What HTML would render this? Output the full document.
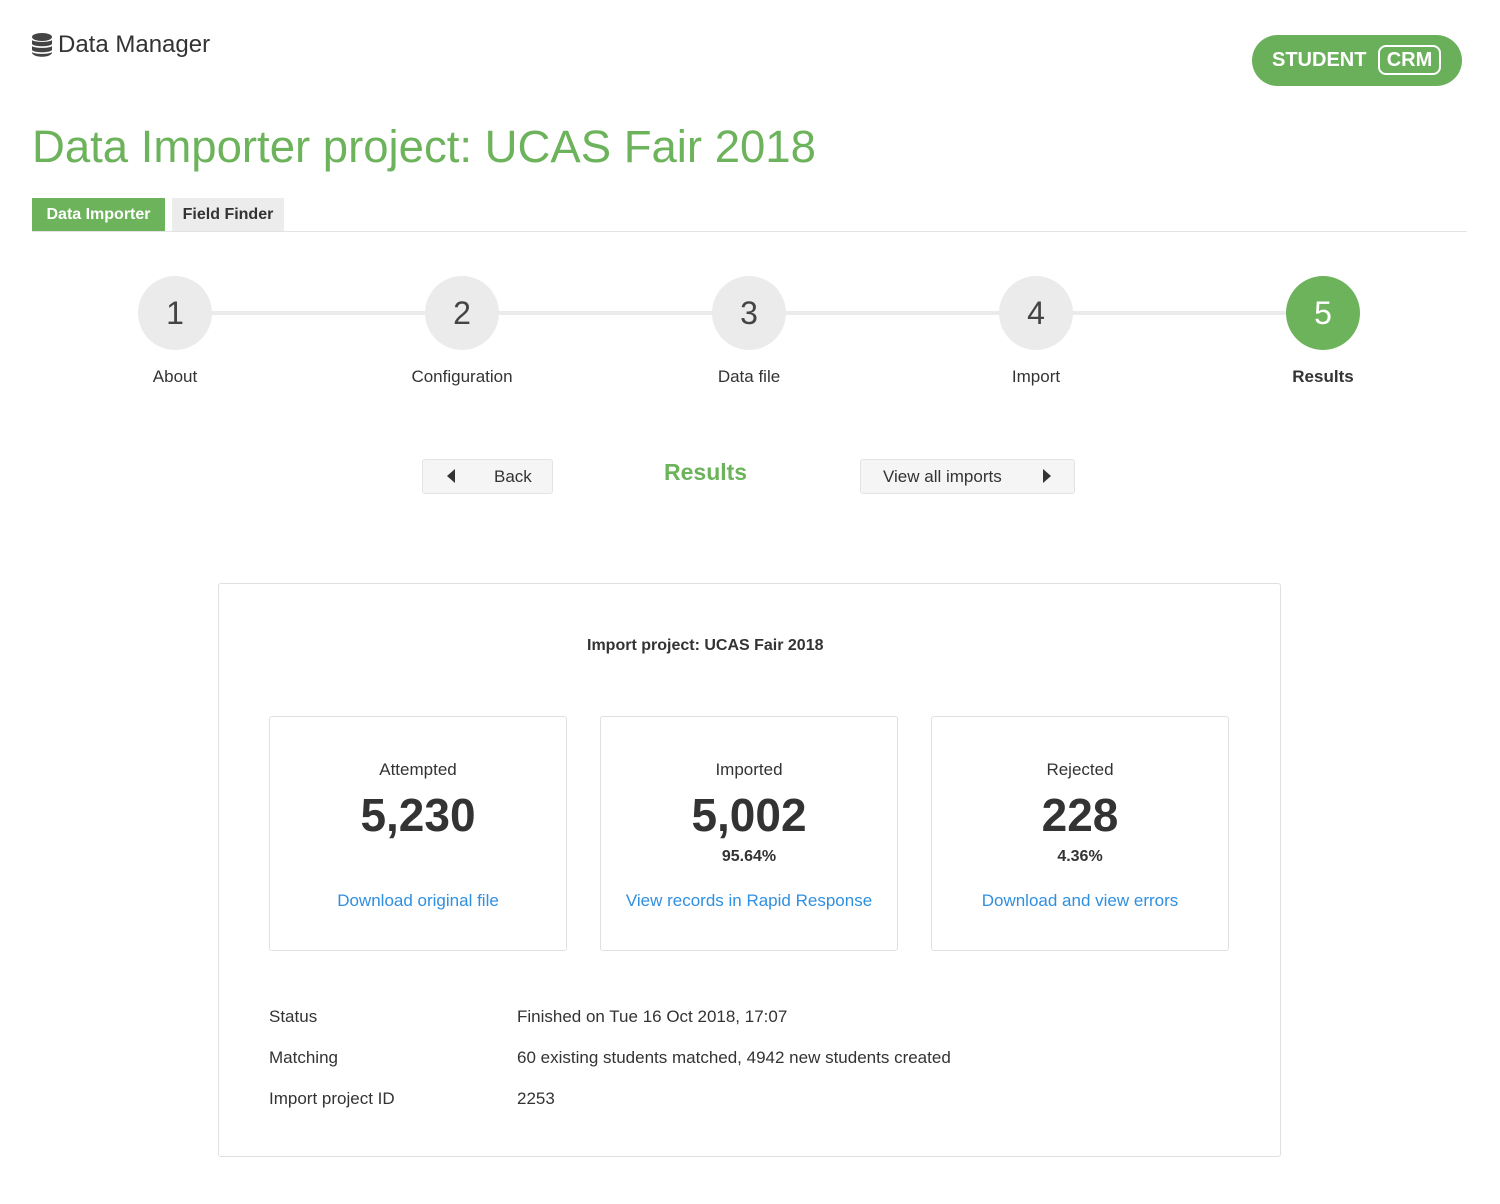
<!DOCTYPE html>
<html><head><meta charset="utf-8"><style>
*{margin:0;padding:0;box-sizing:border-box}
body{width:1500px;height:1204px;background:#fff;font-family:"Liberation Sans","DejaVu Sans",sans-serif;color:#333;position:relative;overflow:hidden}
.a{position:absolute}
.circ{position:absolute;width:74px;height:74px;border-radius:50%;background:#ebebeb;color:#444;font-size:32px;text-align:center;line-height:74px;top:276px}
.lbl{position:absolute;top:367px;width:200px;text-align:center;font-size:17px;color:#333}
.btn{position:absolute;top:459px;height:35px;border:1px solid #e3e3e3;border-radius:3px;background:#f5f5f5;font-size:17px;color:#333}
.box{position:absolute;top:716px;width:298px;height:235px;border:1px solid #e0e0e0;border-radius:3px;text-align:center}
.box .t{position:absolute;top:43px;width:100%;font-size:17px}
.box .n{position:absolute;top:71px;width:100%;font-size:46px;font-weight:bold;color:#333}
.box .p{position:absolute;top:131px;width:100%;font-size:16px;font-weight:bold}
.box .l{position:absolute;top:174px;width:100%;font-size:17px;color:#2f8fe0}
.row{position:absolute;left:269px;font-size:17px}
.row span{position:absolute;left:248px;white-space:nowrap}
</style></head><body>
<svg class="a" style="left:31px;top:33px" width="22" height="24" viewBox="0 0 22 24"><g fill="#444"><ellipse cx="11" cy="4" rx="10" ry="4"/><path d="M1 7c2 2.5 18 2.5 20 0v4c-2 3-18 3-20 0z"/><path d="M1 13c2 2.5 18 2.5 20 0v4c-2 3-18 3-20 0z"/><path d="M1 19c2 2.5 18 2.5 20 0v1c-2 5-18 5-20 0z"/></g></svg>
<div class="a" style="left:58px;top:31px;font-size:24px;color:#333">Data Manager</div>
<div class="a" style="left:1252px;top:35px;width:210px;height:51px;border-radius:26px;background:#6aaf5a;color:#fff;font-weight:bold;font-size:20px">
<span class="a" style="left:20px;top:14px">STUDENT</span>
<span class="a" style="left:126px;top:10px;width:63px;height:30px;border:2px solid #fff;border-radius:8px;text-align:center;line-height:26px">CRM</span>
</div>
<div class="a" style="left:32px;top:121px;font-size:45.5px;color:#6cb35b;white-space:nowrap">Data Importer project: UCAS Fair 2018</div>
<div class="a" style="left:32px;top:198px;width:133px;height:33px;background:#6cb35b;color:#fff;font-weight:bold;font-size:16px;text-align:center;line-height:33px">Data Importer</div>
<div class="a" style="left:172px;top:198px;width:112px;height:33px;background:#ececec;color:#333;font-weight:bold;font-size:16px;text-align:center;line-height:33px">Field Finder</div>
<div class="a" style="left:32px;top:231px;width:1435px;height:1px;background:#e3e3e3"></div>
<div class="a" style="left:175px;top:311px;width:1148px;height:4px;background:#ebebeb"></div>
<div class="circ" style="left:138px">1</div>
<div class="circ" style="left:425px">2</div>
<div class="circ" style="left:712px">3</div>
<div class="circ" style="left:999px">4</div>
<div class="circ" style="left:1286px;background:#6cb35b;color:#fff">5</div>
<div class="lbl" style="left:75px">About</div>
<div class="lbl" style="left:362px">Configuration</div>
<div class="lbl" style="left:649px">Data file</div>
<div class="lbl" style="left:936px">Import</div>
<div class="lbl" style="left:1223px;font-weight:bold">Results</div>
<div class="btn" style="left:422px;width:131px"><span class="a" style="left:24px;top:9px;width:0;height:0;border-top:7px solid transparent;border-bottom:7px solid transparent;border-right:8px solid #333"></span><span class="a" style="left:71px;top:7px">Back</span></div>
<div class="a" style="left:664px;top:459px;font-size:23px;font-weight:bold;color:#6cb35b">Results</div>
<div class="btn" style="left:860px;width:215px"><span class="a" style="left:22px;top:7px">View all imports</span><span class="a" style="left:182px;top:9px;width:0;height:0;border-top:7px solid transparent;border-bottom:7px solid transparent;border-left:8px solid #333"></span></div>
<div class="a" style="left:218px;top:583px;width:1063px;height:574px;border:1px solid #e0e0e0;border-radius:3px"></div>
<div class="a" style="left:587px;top:637px;font-size:16px;font-weight:bold">Import project: UCAS Fair 2018</div>
<div class="box" style="left:269px"><div class="t">Attempted</div><div class="n">5,230</div><div class="l">Download original file</div></div>
<div class="box" style="left:600px"><div class="t">Imported</div><div class="n">5,002</div><div class="p">95.64%</div><div class="l">View records in Rapid Response</div></div>
<div class="box" style="left:931px"><div class="t">Rejected</div><div class="n">228</div><div class="p">4.36%</div><div class="l">Download and view errors</div></div>
<div class="row" style="top:1007px">Status<span>Finished on Tue 16 Oct 2018, 17:07</span></div>
<div class="row" style="top:1048px">Matching<span>60 existing students matched, 4942 new students created</span></div>
<div class="row" style="top:1089px">Import project ID<span>2253</span></div>
</body></html>
